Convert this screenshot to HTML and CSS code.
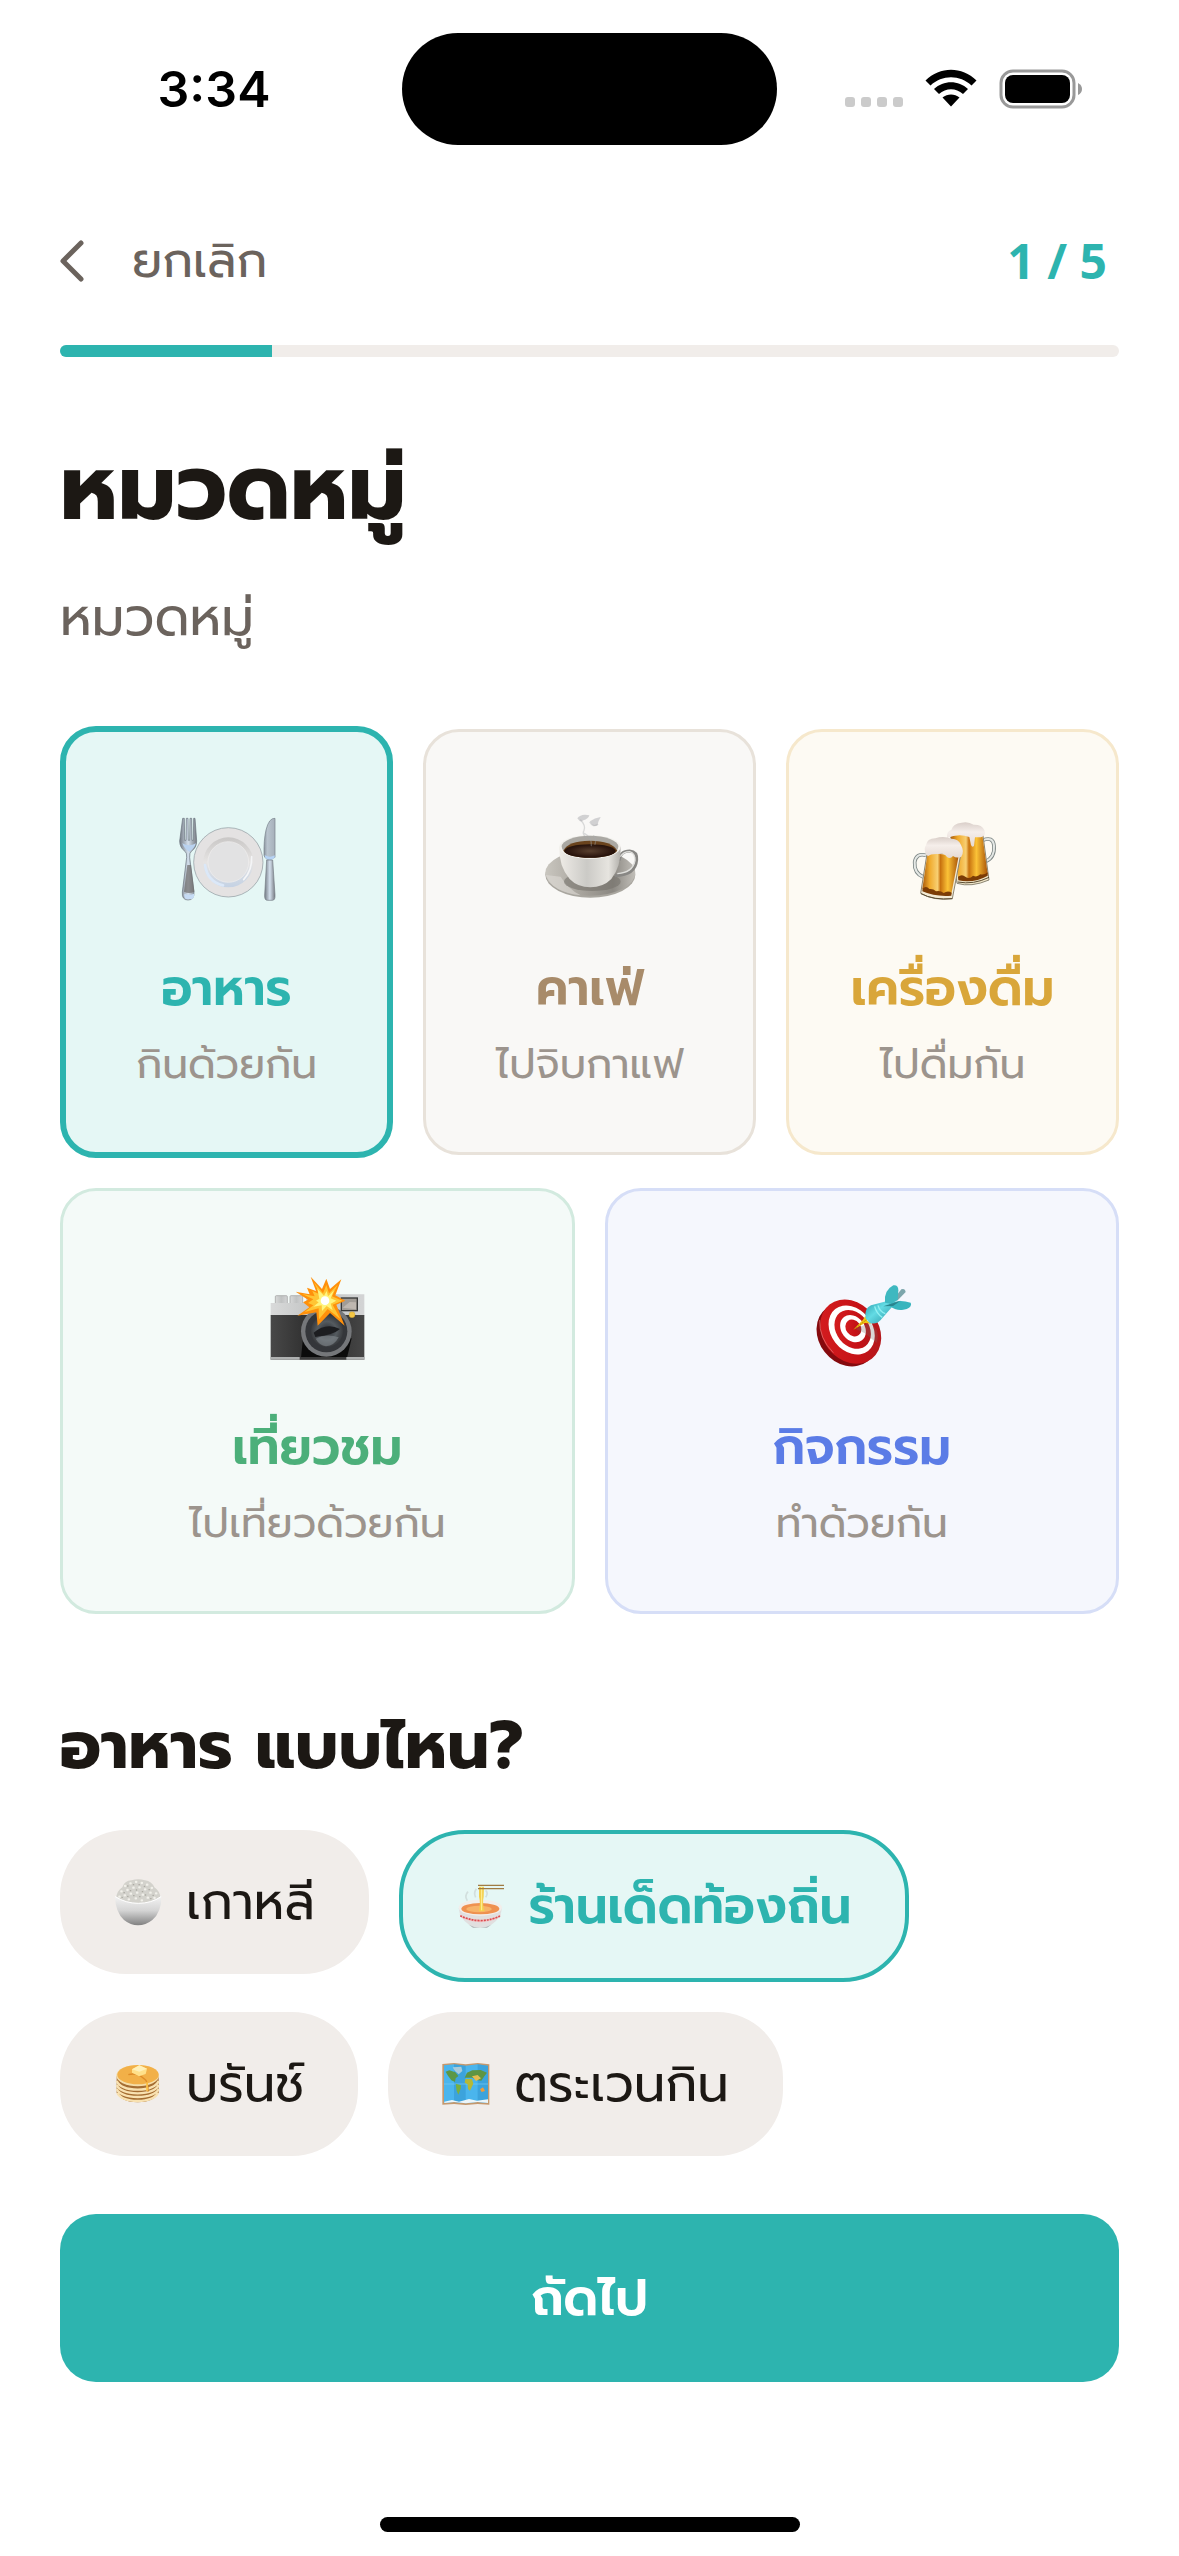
FILE: index.html
```
<!DOCTYPE HTML>
<html lang="th">
<head>
<meta charset="utf-8">
<meta name="viewport" content="width=device-width, initial-scale=1">
<title>หมวดหมู่</title>
<link rel="stylesheet" href="styles.css">
</head>

<body>
<div class="statusbar">
	<div class="time">3:34</div>
	<div class="island"></div>
	<div class="status-icons">
		<svg width="58" height="40" viewBox="0 0 58 40" fill="#cbcbcb">
			<rect x="0" y="28" width="10" height="10" rx="3"/>
			<rect x="16" y="28" width="10" height="10" rx="3"/>
			<rect x="32" y="28" width="10" height="10" rx="3"/>
			<rect x="48" y="28" width="10" height="10" rx="3"/>
		</svg>
		<svg width="52" height="40" viewBox="0 0 52 40">
			<path d="M0.500 11.500 C15 -3 37 -3 51.500 11.500 L46.500 16.500 C35 5.500 17 5.500 5.500 16.500Z"/>
			<path d="M9 20 C18.500 11 33.500 11 43 20 L38 25 C31 18.500 21 18.500 14 25Z"/>
			<path d="M17.500 28.500 C22.500 24.500 29.500 24.500 34.500 28.500 L26 37.500Z"/>
		</svg>
		<svg width="84" height="40" viewBox="0 0 84 40">
			<rect x="2" y="2" width="73" height="36" rx="12" fill="none" stroke="#999" stroke-width="3"/>
			<rect x="6" y="6" width="65" height="28" rx="8"/>
			<path d="M79 14 Q83 16 83 20 Q83 24 79 26Z" fill="#999"/>
		</svg>
	</div>
</div>

<div class="header">
	<button class="back" type="button">
		<svg width="24" height="42" viewBox="0 0 24 42" fill="none" stroke="#6b635d" stroke-width="5" stroke-linecap="round" stroke-linejoin="round"><path d="M21 3 L3 21 L21 39"/></svg>
		<span>ยกเลิก</span>
	</button>
	<span class="step">1 / 5</span>
</div>
<div class="progress"><div class="bar"></div></div>

<main class="content">
	<h1>หมวดหมู่</h1>
	<p class="lead">หมวดหมู่</p>

	<div class="cards">
		<button class="card food selected" type="button" aria-pressed="true">
			<svg class="pic" viewBox="410 300 300 300">
				<defs>
					<linearGradient id="steel" x1="0" x2="1" y1="0" y2="0"><stop offset="0" stop-color="#747b84"/><stop offset=".5" stop-color="#d3dfec"/><stop offset="1" stop-color="#777b82"/></linearGradient>
					<linearGradient id="blade" x1="0" x2="1" y1="0" y2="0"><stop offset="0" stop-color="#8b949e"/><stop offset=".3" stop-color="#b9c4ce"/><stop offset="1" stop-color="#a6b0ba"/></linearGradient>
					<linearGradient id="well" x1="0" x2="0" y1="0" y2="1"><stop offset="0" stop-color="#c9c7c6"/><stop offset=".5" stop-color="#e6e4e3"/><stop offset="1" stop-color="#c4d2e4"/></linearGradient>
				</defs>
				<circle cx="564" cy="457" r="104" fill="#e4e2e2" stroke="#8b959c" stroke-width="2"/>
				<circle cx="564" cy="457" r="75" fill="url(#well)"/>
				<circle cx="564" cy="456" r="61" fill="#e2e2e3" stroke="#f0efee" stroke-width="2"/>
				<path d="M494 465 Q501 515 548 526" fill="none" stroke="#dbe8f8" stroke-width="8" stroke-linecap="round"/>
				<path d="M634 440 Q636 480 610 509" fill="none" stroke="#f4f5f7" stroke-width="5" stroke-linecap="round"/>
				<path d="M427 325 h5 l1 66 h4 l1 -66 h5 l1 66 h4 l1 -66 h5 l1 66 h4 l1 -66 h4 l5 68 q0 20 -16 31 q-6 5 -5 18 l13 104 q1 24 -18 24 q-19 0 -17 -24 l13 -104 q1 -13 -5 -18 q-16 -11 -16 -31Z" fill="url(#steel)" stroke="#68717b" stroke-width="2"/>
				<path d="M426 400 Q446 412 467 400 Q462 416 447 425 Q431 416 426 400Z" fill="#b9d2ef"/>
				<path d="M441 465 L431 545 Q446 553 462 545 L452 465Z" fill="#6d6b6a" opacity=".7"/>
				<path d="M432 551 q14 6 29 0 q2 14 -7 16 h-15 q-9 -3 -7 -16Z" fill="#c6dbf4"/>
				<path d="M704 325 Q686 323 677 360 Q670 390 671 436 Q675 449 688 449 L704 442Z" fill="url(#blade)" stroke="#75808a" stroke-width="2"/>
				<path d="M673 435 Q688 445 703 436 V443 Q688 457 675 444Z" fill="#b5d2f4"/>
				<path d="M679 450 h18 l7 105 q1 16 -8 16 h-15 q-9 0 -8 -16Z" fill="url(#steel)" stroke="#727a83" stroke-width="2"/>
			</svg>
			<span class="name">อาหาร</span>
			<span class="desc">กินด้วยกัน</span>
		</button>
		<button class="card cafe" type="button" aria-pressed="false">
			<svg class="pic" viewBox="418 300 300 300">
				<defs>
					<linearGradient id="cup" x1="0" x2="1" y1="0" y2="0"><stop offset="0" stop-color="#efece7"/><stop offset=".45" stop-color="#cbcac6"/><stop offset=".8" stop-color="#e6e4df"/><stop offset="1" stop-color="#b1afaa"/></linearGradient>
					<linearGradient id="saucer" x1="0" x2="1" y1="0" y2="0"><stop offset="0" stop-color="#c9c6bf"/><stop offset=".5" stop-color="#9f9b94"/><stop offset=".75" stop-color="#8c8983"/><stop offset="1" stop-color="#c2bfb9"/></linearGradient>
					<radialGradient id="coffee"><stop offset="0" stop-color="#59402f"/><stop offset=".8" stop-color="#2e1810"/><stop offset="1" stop-color="#24110a"/></radialGradient>
				</defs>
				<ellipse cx="569" cy="494" rx="135" ry="69" fill="#a9a69f"/>
				<ellipse cx="569" cy="489" rx="135" ry="68" fill="url(#saucer)"/>
				<path d="M436 495 Q455 548 540 556 Q500 535 480 500Z" fill="#dedbd5" opacity=".6"/>
				<ellipse cx="575" cy="515" rx="85" ry="28" fill="#77736c" opacity=".6"/>
				<path d="M655 452 Q658 423 687 423 Q710 425 708 450 Q704 496 643 497" fill="none" stroke="#888784" stroke-width="9"/>
				<path d="M659 440 Q668 425 687 425 Q704 430 703 452 Q696 488 650 491" fill="none" stroke="#dfdfdc" stroke-width="4"/>
				<path d="M476 410 Q474 468 507 507 Q531 532 569 532 Q607 532 632 507 Q662 468 660 410Z" fill="url(#cup)"/>
				<ellipse cx="568" cy="411" rx="92" ry="36" fill="#f2f1ed"/>
				<ellipse cx="568" cy="410" rx="85" ry="33" fill="#aaa8a3"/>
				<path d="M488 422 Q502 392 568 392 Q634 392 650 422 Q632 443 568 443 Q504 443 488 422Z" fill="#6a431d"/>
				<ellipse cx="568" cy="423" rx="77" ry="20" fill="url(#coffee)"/>
				<path d="M540 330 Q556 347 550 361 Q543 371 557 383 M568 337 Q577 353 591 343 M551 370 Q574 382 572 407 M579 377 Q588 386 583 403" fill="none" stroke="#a8a9ac" stroke-width="4" opacity=".4" stroke-linecap="round"/>
				<path d="M530 325 Q541 310 566 316 Q563 327 548 331 Q540 340 530 325Z M568 334 Q582 324 600 321 Q592 334 590 346 Q577 354 568 334Z" fill="#a9aaad" opacity=".5"/>
			</svg>
			<span class="name">คาเฟ่</span>
			<span class="desc">ไปจิบกาแฟ</span>
		</button>
		<button class="card drink" type="button" aria-pressed="false">
			<svg class="pic" viewBox="398 300 300 300">
				<defs>
					<linearGradient id="beer" x1="0" x2="1" y1="0" y2="0"><stop offset="0" stop-color="#a95a0c"/><stop offset=".2" stop-color="#f0aa2c"/><stop offset=".42" stop-color="#f8cf72"/><stop offset=".5" stop-color="#c8720f"/><stop offset=".7" stop-color="#fbc237"/><stop offset="1" stop-color="#a95306"/></linearGradient>
					<linearGradient id="foam" x1="0" x2="0" y1="0" y2="1"><stop offset="0" stop-color="#d9cec8"/><stop offset=".4" stop-color="#f5eeea"/><stop offset="1" stop-color="#e5dad4"/></linearGradient>
				</defs>
				<path d="M637 391 Q668 378 671 407 Q674 443 645 455" fill="none" stroke="#7d8685" stroke-width="11"/>
				<path d="M637 391 Q668 378 671 407 Q674 443 645 455" fill="none" stroke="#e5e8e5" stroke-width="6"/>
				<path d="M540 370 L560 520 Q602 533 656 510 L637 370Z" fill="#f0e5c8" stroke="#8b8573" stroke-width="3"/>
				<path d="M540 375 L564 506 Q610 512 652 492 L636 375Z" fill="url(#beer)"/>
				<path d="M563 500 q12 -9 22 0 q12 9 23 -3 q12 6 22 -4 q12 3 22 -6 v10 q-40 23 -88 14Z" fill="#7c3c06"/>
				<path d="M562 516 Q610 525 656 502" fill="none" stroke="#594a30" stroke-width="3"/>
				<path d="M530 384 Q528 363 543 360 Q548 340 574 338 Q593 333 610 344 Q634 343 642 360 Q648 378 632 382 H614 L611 407 Q606 414 602 405 L597 381 Q565 369 530 384Z" fill="url(#foam)"/>
				<path d="M467 436 Q438 428 433 456 Q431 490 459 501" fill="none" stroke="#7d8685" stroke-width="11"/>
				<path d="M467 436 Q438 428 433 456 Q431 490 459 501" fill="none" stroke="#e5e8e5" stroke-width="6"/>
				<path d="M471 425 L451 550 Q490 573 546 566 L571 435Z" fill="#f3ead4" stroke="#8b8573" stroke-width="3"/>
				<path d="M472 428 L456 537 Q498 559 543 552 L565 438Z" fill="url(#beer)"/>
				<path d="M457 536 q10 -10 20 1 q11 -2 20 7 q12 -4 23 5 q12 -9 24 -1 l-1 9 q-48 4 -87 -13Z" fill="#7c3c06"/>
				<path d="M452 551 Q490 571 546 566" fill="none" stroke="#594a30" stroke-width="3"/>
				<path d="M467 434 Q459 415 467 406 Q470 385 495 385 Q519 376 544 386 Q566 387 572 405 Q583 425 573 440 Q559 446 548 438 Q540 449 530 441 Q520 426 503 432 Q480 431 474 438Z" fill="url(#foam)"/>
			</svg>
			<span class="name">เครื่องดื่ม</span>
			<span class="desc">ไปดื่มกัน</span>
		</button>
	</div>
	<div class="cards">
		<button class="card trip" type="button" aria-pressed="false">
			<svg class="pic" viewBox="22 12 300 300">
				<defs>
					<linearGradient id="silver" x1="0" x2="1" y1="0" y2="0"><stop offset="0" stop-color="#d9dada"/><stop offset=".5" stop-color="#c0c2c2"/><stop offset="1" stop-color="#d3d4d5"/></linearGradient>
					<linearGradient id="leather" x1="0" x2="1" y1="0" y2="0"><stop offset="0" stop-color="#484848"/><stop offset=".5" stop-color="#292929"/><stop offset="1" stop-color="#464646"/></linearGradient>
					<radialGradient id="lens"><stop offset="0" stop-color="#282a2e"/><stop offset=".6" stop-color="#555b60"/><stop offset="1" stop-color="#393b3e"/></radialGradient>
				</defs>
				<rect x="47" y="92" width="36" height="26" rx="3" fill="url(#silver)" stroke="#989898" stroke-width="2"/>
				<rect x="91" y="92" width="38" height="26" rx="3" fill="url(#silver)" stroke="#989898" stroke-width="2"/>
				<path d="M33 114 H140 V88 H314 V152 H33Z" fill="url(#silver)"/>
				<path d="M33 150 H314 V284 H33Z" fill="url(#leather)"/>
				<path d="M130 220 L276 220 L262 278 H124Z" fill="#0b0b0b"/>
				<path d="M33 276 H314 V284 H33Z" fill="#aeb0b0"/>
				<path d="M120 276 H260 V284 H120Z" fill="#3c3c3c"/>
				<circle cx="200" cy="199" r="76" fill="#75777a"/>
				<circle cx="200" cy="199" r="63" fill="#34363a"/>
				<circle cx="202" cy="198" r="48" fill="url(#lens)"/>
				<path d="M162 203 Q200 171 241 192 Q221 210 167 216Z" fill="#1c1d20"/>
				<path d="M168 221 Q200 205 237 217 Q224 242 199 244 Q179 241 168 221Z" fill="#848b90" opacity=".6"/>
				<rect x="245" y="99" width="48" height="38" fill="#a19c96" stroke="#373838" stroke-width="4"/>
				<path d="M249 128 L270 111 L289 112 V133Z" fill="#beb7b0"/>
				<circle cx="277" cy="149" r="9" fill="#f4c744" stroke="#b58f30" stroke-width="1"/>
				<path d="M153 35 L187 72 L200 41 L211 72 L245 43 L227 91 L257 107 L230 119 L255 182 L211 144 L174 182 L170 142 L113 152 L149 127 L130 112 L145 104 L108 80 L150 88 L142 68 L169 78Z" fill="#ff900b"/>
				<path d="M163 52 L190 85 L200 60 L208 85 L234 59 L217 94 L248 107 L219 119 L242 162 L204 132 L178 163 L177 130 L135 141 L161 121 L145 114 L161 103 L127 87 L165 94 L158 78 L180 88Z" fill="#ffc534"/>
				<path d="M173 71 L193 92 L201 78 L205 94 L223 76 L213 100 L230 107 L213 116 L219 136 L201 123 L187 138 L186 121 L161 125 L177 112 L169 107 L179 101Z" fill="#fff47d"/>
				<circle cx="196" cy="107" r="13" fill="#fff"/>
			</svg>
			<span class="name">เที่ยวชม</span>
			<span class="desc">ไปเที่ยวด้วยกัน</span>
		</button>
		<button class="card play" type="button" aria-pressed="false">
			<svg class="pic" viewBox="35 -3 300 300">
				<defs>
					<linearGradient id="dart" x1="0" x2="1" y1="0" y2="1"><stop offset="0" stop-color="#2b9eae"/><stop offset=".45" stop-color="#63dbe4"/><stop offset="1" stop-color="#2b95a4"/></linearGradient>
					<linearGradient id="board" x1="0" x2="1" y1="0" y2="1"><stop offset="0" stop-color="#d71f22"/><stop offset=".6" stop-color="#c61216"/><stop offset="1" stop-color="#a81c20"/></linearGradient>
				</defs>
				<ellipse cx="140" cy="194" rx="85" ry="101" transform="rotate(-38 140 194)" fill="#850a0e"/>
				<ellipse cx="151" cy="185" rx="84" ry="103" transform="rotate(-38 151 185)" fill="url(#board)"/>
				<path d="M58 150 Q56 205 99 248" fill="none" stroke="#e37b7b" stroke-width="2"/>
				<ellipse cx="154" cy="180" rx="62" ry="80" transform="rotate(-38 154 180)" fill="#fff"/>
				<ellipse cx="157" cy="178" rx="49" ry="63" transform="rotate(-38 157 178)" fill="url(#board)"/>
				<ellipse cx="158" cy="176" rx="35" ry="44" transform="rotate(-38 158 176)" fill="#fff"/>
				<ellipse cx="159" cy="174" rx="22" ry="27" transform="rotate(-38 159 174)" fill="url(#board)"/>
				<path d="M164 176 L194 190 L229 219 Q236 197 228 178 L209 158Z" fill="#756b67" opacity=".28"/>
				<path d="M159 179 L188 149 L195 138 L201 153 L214 161 L194 159Z" fill="#f1c214"/>
				<path d="M162 177 L204 145" stroke="#8b6d00" stroke-width="2" stroke-dasharray="4 3"/>
				<path d="M196 145 Q191 115 212 106 L264 92 L275 111 L241 150 Q226 166 207 158Z" fill="url(#dart)"/>
				<path d="M233 106 Q239 126 255 131 M223 109 Q228 130 246 142" fill="none" stroke="#93f1f3" stroke-width="4"/>
				<path d="M276 92 L303 58 Q314 54 316 66 L292 91Z" fill="#7ca6ac"/>
				<path d="M254 98 Q250 61 279 46 Q294 44 294 61 L292 90 L273 101Z" fill="#3eb8c0"/>
				<path d="M266 101 Q295 87 331 98 Q337 115 309 119 Q288 123 268 108Z" fill="#38b5be"/>
				<path d="M249 109 L301 92 L278 108Z" fill="#2a858f"/>
			</svg>
			<span class="name">กิจกรรม</span>
			<span class="desc">ทำด้วยกัน</span>
		</button>
	</div>

	<h2>อาหาร แบบไหน?</h2>
	<div class="chips">
		<button class="chip" type="button" aria-pressed="false">
			<svg class="emoji" viewBox="75 58 144 144">
				<defs>
					<linearGradient id="bowl" x1="0" x2="0" y1="0" y2="1"><stop offset="0" stop-color="#f4f4f4"/><stop offset=".5" stop-color="#d4d4d4"/><stop offset="1" stop-color="#818181"/></linearGradient>
				</defs>
				<path d="M81 119 Q84 96 100 86 Q106 66 128 65 Q147 59 168 65 Q188 68 196 86 Q212 96 215 119 Q148 150 81 119Z" fill="#d3d2cc"/>
				<path d="M108 82 h1 M124 74 h1 M141 70 h1 M158 73 h1 M174 78 h1 M188 88 h1 M97 98 h1 M115 94 h1 M133 87 h1 M151 86 h1 M168 92 h1 M184 102 h1 M201 104 h1 M91 114 h1 M107 110 h1 M125 105 h1 M144 102 h1 M161 108 h1 M176 117 h1 M196 118 h1 M119 122 h1 M140 119 h1 M158 125 h1" fill="none" stroke="#f1f0ea" stroke-width="7" stroke-linecap="round"/>
				<path d="M116 82 h1 M133 78 h1 M150 78 h1 M166 83 h1 M180 93 h1 M105 102 h1 M124 96 h1 M142 94 h1 M160 99 h1 M192 110 h1 M99 116 h1 M116 113 h1 M134 111 h1 M152 114 h1 M169 109 h1 M185 120 h1" fill="none" stroke="#aaa9a1" stroke-width="4" stroke-linecap="round"/>
				<path d="M78 112 Q110 134 148 134 Q187 134 217 112 Q218 160 190 184 Q170 200 147 200 Q125 200 105 184 Q79 160 78 112Z" fill="url(#bowl)"/>
				<path d="M79 114 Q110 134 148 134 Q187 134 216 114" fill="none" stroke="#fff" stroke-width="3"/>
			</svg>
			<span>เกาหลี</span>
		</button>
		<button class="chip selected" type="button" aria-pressed="true">
			<svg class="emoji" viewBox="1104 70 144 144">
				<path d="M1135 126 Q1125 112 1137 99 M1160 116 Q1153 103 1162 90 M1190 116 Q1199 103 1190 95" fill="none" stroke="#cbd4d3" stroke-width="5" opacity=".7"/>
				<path d="M1109 148 Q1112 180 1140 198 Q1173 217 1207 198 Q1236 180 1239 148Z" fill="#e1dfdf"/>
				<path d="M1140 198 Q1173 217 1207 198 L1194 207 H1152Z" fill="#aeb0b2"/>
				<ellipse cx="1174" cy="147" rx="65" ry="24" fill="#f2eeeb"/>
				<ellipse cx="1174" cy="150" rx="57" ry="17" fill="#ef9150"/>
				<ellipse cx="1170" cy="151" rx="38" ry="10" fill="#f7b36a"/>
				<path d="M1112 167 Q1138 183 1174 184 Q1211 183 1236 167 L1232 176 Q1209 190 1174 191 Q1139 190 1116 176Z" fill="#f3c7c8"/>
				<path d="M1114 171 Q1138 184 1174 186 Q1211 184 1235 171" fill="none" stroke="#d94c50" stroke-width="5" stroke-dasharray="6 3"/>
				<path d="M1170 84 h15 l-1 30 q-5 20 3 44 h-17 q5 -27 0 -44Z" fill="#f4cf4d"/>
				<path d="M1178 84 V155" stroke="#fff09c" stroke-width="3"/>
				<path d="M1167 80 H1245 M1167 90 H1245" stroke="#a07b43" stroke-width="4"/>
			</svg>
			<span>ร้านเด็ดท้องถิ่น</span>
		</button>
		<button class="chip" type="button" aria-pressed="false">
			<svg class="emoji" viewBox="75 611 144 144">
				<path d="M83 660 V708 Q96 738 146 738 Q196 738 209 708 V660Z" fill="#a56d32"/>
				<path d="M83 674 Q94 699 146 700 Q198 699 209 674 M83 686 Q94 710 146 711 Q198 710 209 686 M83 698 Q94 721 146 722 Q198 721 209 698 M85 709 Q96 732 146 734 Q196 732 207 709" fill="none" stroke="#f8e1b1" stroke-width="7"/>
				<ellipse cx="146" cy="658" rx="64" ry="32" fill="#f5dda7"/>
				<ellipse cx="147" cy="655" rx="62" ry="29" fill="#f2b048"/>
				<path d="M118 655 Q145 648 165 667 Q178 674 177 706" fill="none" stroke="#df8c27" stroke-width="4"/>
				<path d="M174 678 V704" stroke="#ffc64b" stroke-width="5"/>
				<path d="M129 639 L151 627 L174 637 L170 653 L150 660 L129 649Z" fill="#ffe08a"/>
				<path d="M129 639 L151 627 L174 637 L151 646Z" fill="#fff0b8"/>
			</svg>
			<span>บรันช์</span>
		</button>
		<button class="chip" type="button" aria-pressed="false">
			<svg class="emoji" viewBox="1060 606 144 144">
				<path d="M1061 618 L1096 615 L1131 619 L1167 615 L1202 619 V740 L1167 738 L1131 741 L1096 738 L1061 740Z" fill="#c4986d"/>
				<path d="M1066 622 L1096 619 L1131 623 L1167 619 L1198 623 V735 L1167 732 L1131 736 L1096 732 L1066 735Z" fill="#4ab5ed"/>
				<path d="M1096 619 L1131 623 V736 L1096 732Z M1167 619 L1198 623 V735 L1167 732Z" fill="#2d91cc" opacity=".5"/>
				<path d="M1066 678 H1198" stroke="#79ccf5" stroke-width="2"/>
				<path d="M1071 641 L1082 637 L1100 643 L1109 654 L1101 661 L1099 672 L1088 667 L1078 653Z" fill="#5b9846"/>
				<path d="M1092 628 L1118 626 L1121 639 L1110 649 L1098 638Z" fill="#a9cbd9"/>
				<path d="M1101 677 L1117 682 L1116 692 L1109 710 L1104 698Z" fill="#79af40"/>
				<path d="M1128 659 L1135 644 L1151 637 L1176 636 L1195 644 L1187 655 L1178 668 L1163 666 L1151 659Z" fill="#5e9543"/>
				<path d="M1130 663 L1150 663 L1154 677 L1144 698 L1138 693 L1137 679 L1128 674Z" fill="#b5b936"/>
				<path d="M1150 655 L1167 651 L1177 661 L1162 669Z" fill="#e5bd50"/>
				<path d="M1174 694 L1183 688 L1189 699 L1179 702Z" fill="#ee9c3c"/>
				<path d="M1067 731 L1090 726 L1111 731 L1141 723 L1165 728 L1198 724 V735 L1167 732 L1131 736 L1096 732 L1067 735Z" fill="#ecf5f9"/>
			</svg>
			<span>ตระเวนกิน</span>
		</button>
	</div>
</main>

<footer class="footer">
	<button class="next" type="button">ถัดไป</button>
	<div class="home-indicator"></div>
</footer>
</body>
</html>
```
FILE: styles.css
```
*{
	box-sizing: border-box;
}
body{
	margin: 0;
	min-height: 100vh;
	display: flex;
	flex-direction: column;
	background: #fff;
	color: #1c1814;
	font-family: "Prompt", "Noto Sans", sans-serif;
}
button{
	border: 0;
	padding: 0;
	margin: 0;
	background: none;
	color: inherit;
	font: inherit;
	cursor: pointer;
}
svg{
	display: block;
	flex: none;
}

/* status bar */
.statusbar{
	height: 177px;
	display: grid;
	grid-template-columns: 1fr 375px 1fr;
	align-items: center;
}
.time{
	padding-left: 26px;
	text-align: center;
	font-family: "Inter", sans-serif;
	font-size: 50px;
	font-weight: 600;
	line-height: 60px;
	color: #000;
}
.island{
	height: 112px;
	border-radius: 56px;
	background: #000;
}
.status-icons{
	display: flex;
	justify-content: flex-end;
	gap: 22px;
	padding-right: 96px;
}

/* header */
.header{
	height: 168px;
	padding: 0 72px 0 60px;
	display: flex;
	align-items: center;
	justify-content: space-between;
}
.back{
	display: flex;
	align-items: center;
	gap: 48px;
	font-size: 48px;
	line-height: 72px;
	color: #6b635d;
}
.step{
	font-family: "Open Sans", sans-serif;
	font-size: 48px;
	font-weight: 700;
	line-height: 72px;
	color: #2db4af;
}
.progress{
	height: 12px;
	margin: 0 60px;
	border-radius: 6px;
	background: #f1edea;
	overflow: hidden;
}
.progress .bar{
	width: 20%;
	height: 100%;
	background: #2db4af;
}

/* content */
.content{
	flex: 1;
	padding: 72px 60px 0;
}
h1{
	margin: 0 0 33px;
	font-size: 91px;
	font-weight: 700;
	line-height: 120px;
}
.lead{
	margin: 0 0 72px;
	font-size: 52px;
	line-height: 72px;
	color: #6b635d;
}
.cards{
	display: grid;
	grid-auto-flow: column;
	grid-auto-columns: 1fr;
	align-items: center;
	gap: 30px;
	margin-bottom: 30px;
}
.card{
	display: flex;
	flex-direction: column;
	align-items: center;
	padding: 78px 0 64px;
	border: 3px solid;
	border-radius: 36px;
}
.card.selected{
	border-width: 6px;
}
.pic{
	width: 100px;
	height: 100px;
	margin-bottom: 48px;
}
.name{
	margin-bottom: 22px;
	font-size: 50px;
	font-weight: 600;
	line-height: 60px;
}
.desc{
	font-size: 41px;
	line-height: 48px;
	color: #9c948d;
}
.food{
	border-color: #2db4af;
	background: #e5f7f5;
	color: #2db4af;
}
.cafe{
	border-color: #e8e2da;
	background: #f9f8f6;
	color: #a88b6a;
}
.drink{
	border-color: #f6e8cc;
	background: #fdfaf3;
	color: #d9a63a;
}
.trip{
	border-color: #d2eadf;
	background: #f4faf8;
	color: #4caf7a;
}
.play{
	border-color: #d6def7;
	background: #f5f7fd;
	color: #5b7ce6;
}

h2{
	margin: 90px 0 42px;
	font-size: 66px;
	font-weight: 700;
	line-height: 84px;
}
.chips{
	display: flex;
	flex-wrap: wrap;
	align-items: flex-start;
	gap: 30px;
}
.chip{
	display: flex;
	align-items: center;
	gap: 24px;
	padding: 36px 54px;
	border-radius: 66px;
	background: #f1edea;
	font-size: 50px;
	line-height: 72px;
}
.chip.selected{
	border: 4px solid #2db4af;
	background: #e5f7f5;
	color: #2db4af;
	font-weight: 600;
}
.emoji{
	width: 48px;
	height: 48px;
}

/* bottom */
.footer{
	padding: 57px 60px 24px;
}
.next{
	display: block;
	width: 100%;
	padding: 48px 0;
	border-radius: 36px;
	background: #2db4af;
	color: #fff;
	font-size: 50px;
	font-weight: 600;
	line-height: 72px;
}
.home-indicator{
	width: 420px;
	height: 15px;
	margin: 135px auto 0;
	border-radius: 8px;
	background: #000;
}
```
